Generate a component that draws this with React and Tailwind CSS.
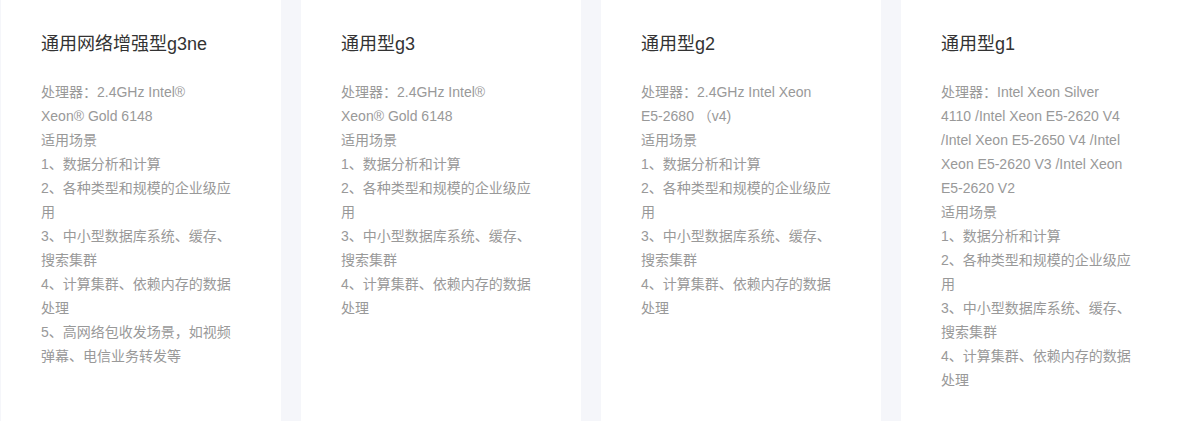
const scenes = [
  "1、数据分析和计算",
  "2、各种类型和规模的企业级应用",
  "3、中小型数据库系统、缓存、搜索集群",
  "4、计算集群、依赖内存的数据处理",
];

// cpu lines are broken by hand so the wrapping matches the original page
const cards = [
  {
    title: "通用网络增强型g3ne",
    cpu: ["处理器：2.4GHz Intel®", "Xeon® Gold 6148"],
    scenes: [...scenes, "5、高网络包收发场景，如视频弹幕、电信业务转发等"],
  },
  {
    title: "通用型g3",
    cpu: ["处理器：2.4GHz Intel®", "Xeon® Gold 6148"],
    scenes,
  },
  {
    title: "通用型g2",
    cpu: ["处理器：2.4GHz Intel Xeon", "E5-2680 （v4)"],
    scenes,
  },
  {
    title: "通用型g1",
    cpu: [
      "处理器：Intel Xeon Silver",
      "4110 /Intel Xeon E5-2620 V4",
      "/Intel Xeon E5-2650 V4 /Intel",
      "Xeon E5-2620 V3 /Intel Xeon",
      "E5-2620 V2",
    ],
    scenes,
  },
];

export default function App() {
  return (
    <div
      className="h-[421px] w-[1177px] overflow-hidden bg-[#f5f6fa] pl-px"
      style={{ fontFamily: '"Liberation Sans", "Noto Sans CJK SC", sans-serif' }}
    >
      <div className="flex gap-5">
        {cards.map((card) => (
          <div key={card.title} className="h-[421px] w-[280px] shrink-0 bg-white px-10 pt-8">
            <h3 className="text-[18px] leading-6 text-[#333]">{card.title}</h3>
            <div className="mt-6 text-[14px] leading-6 text-[#999]">
              {card.cpu.map((line) => (
                <p key={line} className="whitespace-nowrap">{line}</p>
              ))}
              <p>适用场景</p>
              {card.scenes.map((s) => (
                <p key={s}>{s}</p>
              ))}
            </div>
          </div>
        ))}
      </div>
    </div>
  );
}
